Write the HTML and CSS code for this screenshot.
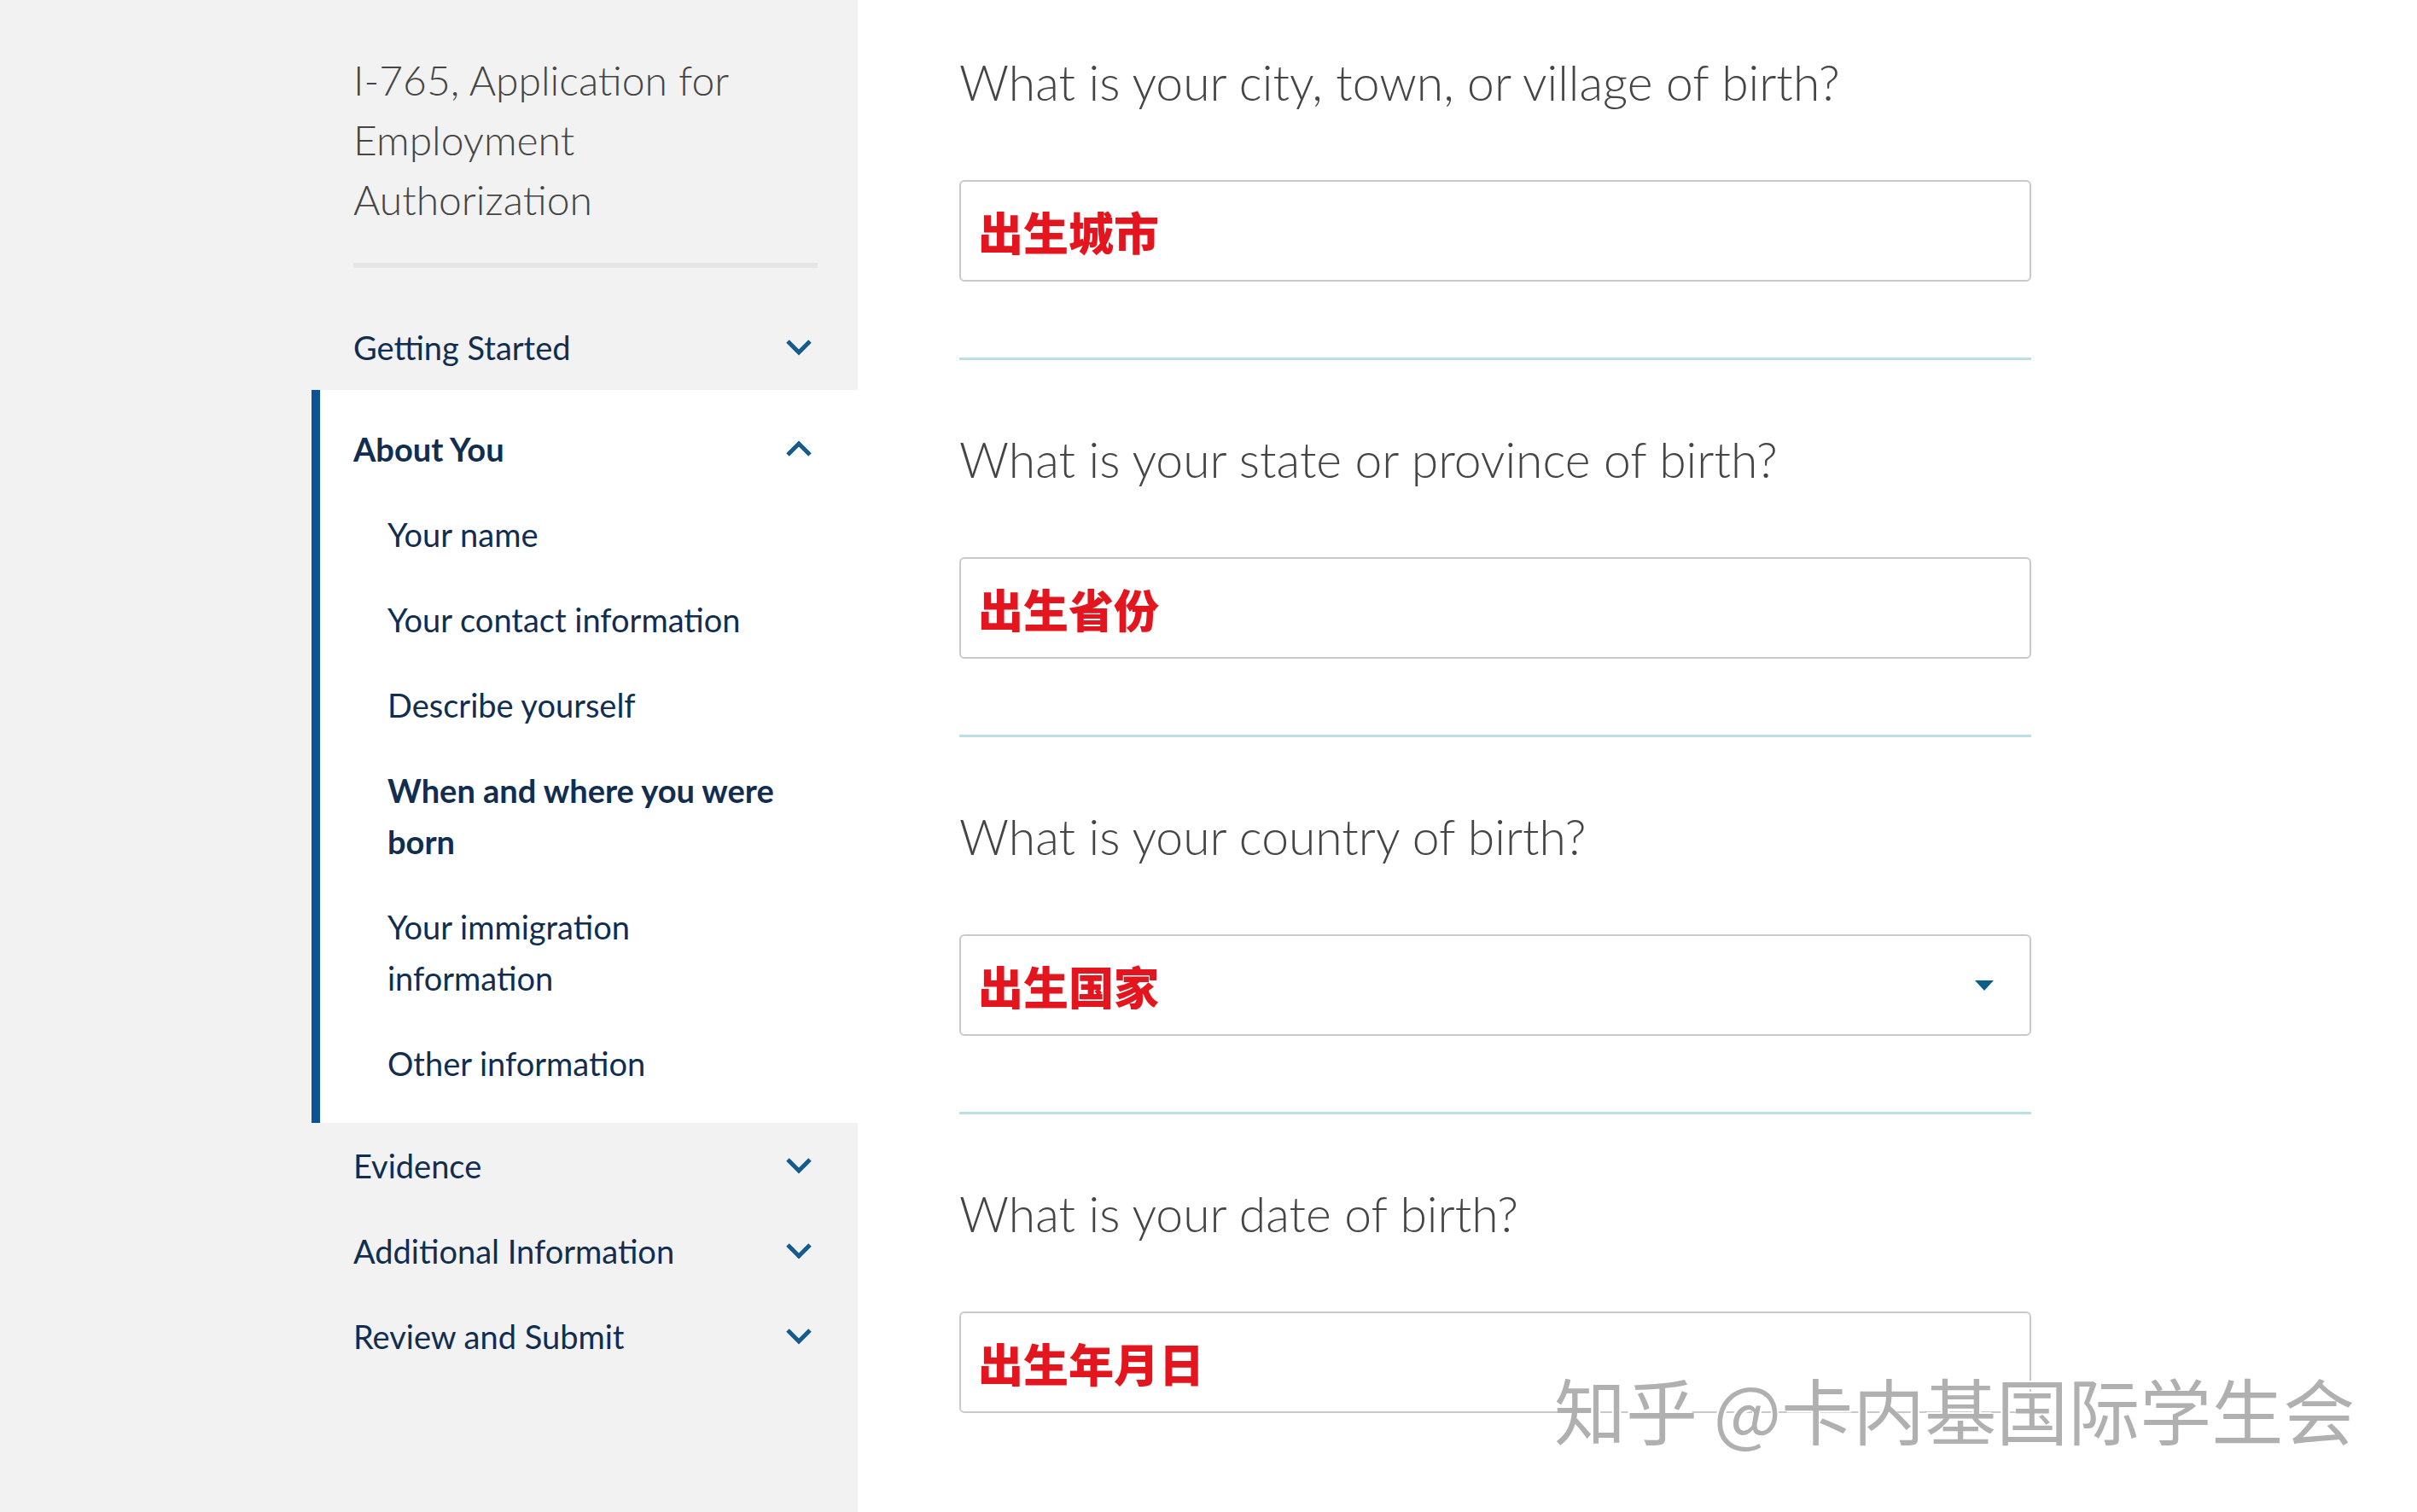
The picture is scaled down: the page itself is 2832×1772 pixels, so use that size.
FILE: index.html
```html
<!DOCTYPE html>
<html lang="en">
<head>
    <meta charset="UTF-8">
    <title>I-765 - When and where you were born</title>
    <link rel="stylesheet" href="styles.css">
</head>
<body>
    <div class="page">
        <aside class="sidebar">
            <h1 class="form-title">I-765, Application for Employment Authorization</h1>
            <div class="title-rule"></div>

            <nav class="steps">
                <div class="step">
                    <div class="step-head">
                        <span>Getting Started</span>
                        <svg class="chevron" viewBox="0 0 32 20"><path d="M3 3 L16 16 L29 3"/></svg>
                    </div>
                </div>

                <div class="step open">
                    <div class="step-head">
                        <span>About You</span>
                        <svg class="chevron" viewBox="0 0 32 20"><path d="M3 17 L16 4 L29 17"/></svg>
                    </div>
                    <ul class="substeps">
                        <li>Your name</li>
                        <li>Your contact information</li>
                        <li>Describe yourself</li>
                        <li class="current">When and where you were born</li>
                        <li>Your immigration information</li>
                        <li>Other information</li>
                    </ul>
                </div>

                <div class="step">
                    <div class="step-head">
                        <span>Evidence</span>
                        <svg class="chevron" viewBox="0 0 32 20"><path d="M3 3 L16 16 L29 3"/></svg>
                    </div>
                </div>
                <div class="step">
                    <div class="step-head">
                        <span>Additional Information</span>
                        <svg class="chevron" viewBox="0 0 32 20"><path d="M3 3 L16 16 L29 3"/></svg>
                    </div>
                </div>
                <div class="step">
                    <div class="step-head">
                        <span>Review and Submit</span>
                        <svg class="chevron" viewBox="0 0 32 20"><path d="M3 3 L16 16 L29 3"/></svg>
                    </div>
                </div>
            </nav>
        </aside>

        <main class="content">
            <section class="question">
                <h2>What is your city, town, or village of birth?</h2>
                <div class="field"><span class="hint">出生城市</span></div>
            </section>
            <section class="question">
                <h2>What is your state or province of birth?</h2>
                <div class="field"><span class="hint">出生省份</span></div>
            </section>
            <section class="question">
                <h2>What is your country of birth?</h2>
                <div class="field select">
                    <span class="hint">出生国家</span>
                    <svg class="caret" viewBox="0 0 24 14"><path d="M1 1 H23 L12 13 Z"/></svg>
                </div>
            </section>
            <section class="question">
                <h2>What is your date of birth?</h2>
                <div class="field"><span class="hint">出生年月日</span></div>
            </section>
        </main>

        <div class="watermark">知乎 @卡内基国际学生会</div>
    </div>
</body>
</html>
```

FILE: styles.css
```css
* {
    margin: 0;
    padding: 0;
    box-sizing: border-box;
}

body {
    background-color: #ffffff;
    font-family: Lato, "Noto Sans CJK SC", sans-serif;
}

.page {
    position: relative;
    display: flex;
    min-height: 100vh;
}

/* Sidebar */
.sidebar {
    width: 1005px;
    flex-shrink: 0;
    background-color: #f2f2f2;
    padding: 59px 0 0 365px;
}

.form-title {
    width: 544px;
    margin-left: 49px;
    font-size: 48px;
    line-height: 70px;
    font-weight: 300;
    color: #454545;
}

.title-rule {
    width: 544px;
    height: 6px;
    margin: 39px 0 43px 49px;
    background-color: #e6e6e6;
}

.step-head {
    display: flex;
    align-items: center;
    justify-content: space-between;
    height: 100px;
    padding: 0 53px 0 49px;
    font-size: 38px;
    color: #112e51;
}

.chevron {
    width: 32px;
    height: 20px;
    fill: none;
    stroke: #155b8c;
    stroke-width: 5;
}

.step.open {
    background-color: #ffffff;
    border-left: 10px solid #0b5394;
    padding: 19px 0 20px;
}

.step.open .step-head {
    padding-left: 39px;
    font-weight: 700;
}

.substeps {
    list-style: none;
    padding: 0 85px 0 79px;
}

.substeps li {
    padding: 20px 0;
    font-size: 38px;
    line-height: 60px;
    color: #112e51;
}

.substeps li.current {
    font-weight: 700;
}

/* Main content */
.content {
    padding: 56px 0 0 119px;
}

.question {
    width: 1256px;
    padding-bottom: 89px;
    margin-bottom: 76px;
    border-bottom: 3px solid #bcdfe6;
}

.question:last-child {
    border-bottom: none;
}

.question h2 {
    font-size: 57px;
    line-height: 80px;
    font-weight: 300;
    color: #454545;
    margin-bottom: 75px;
}

.field {
    display: flex;
    align-items: center;
    justify-content: space-between;
    height: 119px;
    padding: 0 41px 0 20px;
    border: 2px solid #c9c9c9;
    border-radius: 6px;
    background-color: #ffffff;
}

.hint {
    font-family: "Noto Sans CJK SC", sans-serif;
    font-size: 53px;
    font-weight: 900;
    color: #e3161f;
}

.caret {
    width: 24px;
    height: 14px;
    fill: #0b5e8c;
}

.watermark {
    position: absolute;
    left: 1821px;
    top: 1590px;
    font-family: "Noto Sans CJK SC", sans-serif;
    font-size: 84px;
    color: #b0b0b0;
    text-shadow: 2px 2px 0 #ffffff, -2px -2px 0 #ffffff;
    white-space: nowrap;
}
```
